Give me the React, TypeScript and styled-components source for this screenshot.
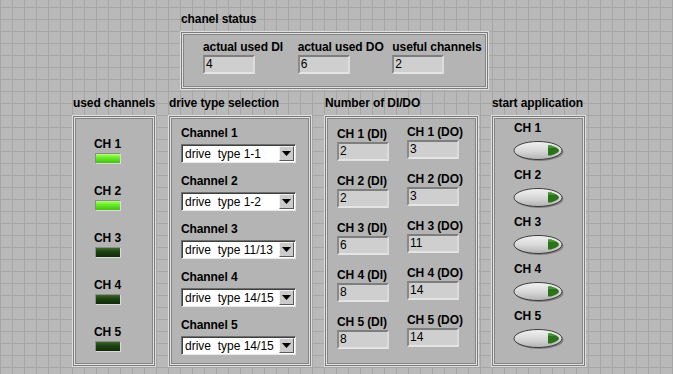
import styled, { createGlobalStyle } from "styled-components";

const GlobalStyle = createGlobalStyle`
  html, body {
    margin: 0;
    padding: 0;
    background: #b8b8b8;
  }
  * { box-sizing: border-box; }
`;

const Panel = styled.div`
  width: 673px;
  height: 374px;
  overflow: hidden;
  padding-top: 12px;
  font-family: "Liberation Sans", Arial, sans-serif;
  color: #000;
  background-color: #b9b9b9;
  background-image:
    linear-gradient(to right, #a6a6a6 1px, transparent 1px),
    linear-gradient(to bottom, #a6a6a6 1px, transparent 1px);
  background-size: 12px 12px;
  background-position: 0 7px;
`;

const TopGroup = styled.div`
  margin-left: 181px;
  width: 307px;
`;

const BottomRow = styled.div`
  display: flex;
  gap: 14px;
  margin: 7px 0 0 73px;
`;

const Group = styled.div<{ $w: number }>`
  width: ${(p) => p.$w}px;
`;

const Caption = styled.div`
  font-size: 12px;
  font-weight: bold;
  line-height: 14px;
  height: 14px;
  white-space: nowrap;
  letter-spacing: -0.1px;
`;

const GroupCaption = styled(Caption)`
  margin-bottom: 6px;
`;

const Frame = styled.div<{ $h: number }>`
  height: ${(p) => p.$h}px;
  background: #b4b4b4;
  border: 1px solid #7c7c7c;
  box-shadow:
    0 0 0 1px #dedede,
    inset 0 0 0 1px #e2e2e2,
    inset 0 0 0 2px #858585;
`;

const StatusFrame = styled(Frame)`
  display: flex;
  padding: 7px 0 0 21px;
`;

const StatusCol = styled.div`
  width: 96px;
  display: flex;
  flex-direction: column;
  gap: 1px;
`;

const Field = styled.div<{ $w?: number }>`
  width: ${(p) => p.$w ?? 52}px;
  height: 19px;
  background: #cfcfcf;
  border-top: 2px solid #7e7e7e;
  border-left: 2px solid #8a8a8a;
  border-bottom: 2px solid #e4e4e4;
  border-right: 2px solid #dcdcdc;
  font-size: 12px;
  line-height: 15px;
  padding-left: 1px;
`;

const LedFrame = styled(Frame)`
  display: flex;
  flex-direction: column;
  gap: 20px;
  padding: 20px 0 0 20px;
`;

const LedItem = styled.div`
  display: flex;
  flex-direction: column;
  gap: 2px;
`;

const Led = styled.div<{ $on: boolean }>`
  width: 26px;
  height: 11px;
  margin-left: 1px;
  border: 1px solid #8c8c8c;
  border-right-color: #dadada;
  border-bottom-color: #dadada;
  background: ${(p) =>
    p.$on
      ? "linear-gradient(to bottom, #b4ff78 0%, #6ff02c 35%, #42c010 100%)"
      : "linear-gradient(to bottom, #3d6a2c 0%, #1f4414 35%, #0f2a08 100%)"};
`;

const DriveFrame = styled(Frame)`
  display: flex;
  flex-direction: column;
  gap: 11px;
  padding: 9px 0 0 11px;
`;

const DriveItem = styled.div`
  display: flex;
  flex-direction: column;
  gap: 4px;
`;

const Select = styled.div`
  width: 115px;
  height: 19px;
  display: flex;
  align-items: center;
  background: #fff;
  border-top: 1px solid #6e6e6e;
  border-left: 1px solid #6e6e6e;
  border-right: 1px solid #e8e8e8;
  border-bottom: 1px solid #e8e8e8;
  box-shadow: inset 1px 1px 0 #404040;
`;

const SelectText = styled.span`
  flex: 1;
  font-size: 12px;
  padding-left: 3px;
  white-space: pre;
`;

const ArrowBtn = styled.div`
  width: 15px;
  height: 15px;
  margin-right: 1px;
  display: flex;
  align-items: center;
  justify-content: center;
  background: #cbcbcb;
  border-top: 1px solid #f2f2f2;
  border-left: 1px solid #f2f2f2;
  border-right: 1px solid #5a5a5a;
  border-bottom: 1px solid #5a5a5a;
`;

const NumFrame = styled(Frame)`
  display: flex;
  padding: 10px 0 0 11px;
`;

const NumCol = styled.div<{ $lift?: boolean }>`
  width: 71px;
  display: flex;
  flex-direction: column;
  gap: 13px;
  margin-top: ${(p) => (p.$lift ? -2 : 0)}px;
`;

const NumItem = styled.div`
  display: flex;
  flex-direction: column;
  gap: 1px;
`;

const StartFrame = styled(Frame)`
  display: flex;
  flex-direction: column;
  gap: 6px;
  padding: 4px 0 0 21px;
`;

const StartItem = styled.div`
  display: flex;
  flex-direction: column;
  gap: 5px;

  svg {
    display: block;
    margin-left: -1px;
  }
`;

const leds = [true, true, false, false, false];
const drives = [
  "drive  type 1-1",
  "drive  type 1-2",
  "drive  type 11/13",
  "drive  type 14/15",
  "drive  type 14/15",
];
const di = ["2", "2", "6", "8", "8"];
const dout = ["3", "3", "11", "14", "14"];

function StartButton() {
  return (
    <svg width="52" height="22" viewBox="0 0 52 22">
      <defs>
        <linearGradient id="btnFill" x1="0" y1="0" x2="0" y2="1">
          <stop offset="0" stopColor="#f2f2f2" />
          <stop offset="0.55" stopColor="#d6d6d6" />
          <stop offset="1" stopColor="#b2b2b2" />
        </linearGradient>
      </defs>
      <ellipse cx="26.5" cy="12" rx="24" ry="9" fill="#808080" />
      <ellipse cx="25" cy="10.5" rx="24" ry="9" fill="url(#btnFill)" stroke="#3c3c3c" strokeWidth="1" />
      <path d="M35 5.5 L38 5.5 Q46 8 46 10.5 Q46 13 38 15.5 L35 15.5 Z" fill="#2b731a" />
      <path d="M35 5.5 L38 5.5 Q42 6.6 44 8 L35 8 Z" fill="#459530" />
    </svg>
  );
}

export default function App() {
  return (
    <Panel>
      <GlobalStyle />
      <TopGroup>
        <GroupCaption>chanel status</GroupCaption>
        <StatusFrame $h={57}>
          <StatusCol>
            <Caption>actual used DI</Caption>
            <Field>4</Field>
          </StatusCol>
          <StatusCol>
            <Caption>actual used DO</Caption>
            <Field>6</Field>
          </StatusCol>
          <StatusCol>
            <Caption>useful channels</Caption>
            <Field>2</Field>
          </StatusCol>
        </StatusFrame>
      </TopGroup>

      <BottomRow>
        <Group $w={82}>
          <GroupCaption>used channels</GroupCaption>
          <LedFrame $h={250}>
            {leds.map((on, i) => (
              <LedItem key={i}>
                <Caption>CH {i + 1}</Caption>
                <Led $on={on} />
              </LedItem>
            ))}
          </LedFrame>
        </Group>

        <Group $w={142}>
          <GroupCaption>drive type selection</GroupCaption>
          <DriveFrame $h={250}>
            {drives.map((d, i) => (
              <DriveItem key={i}>
                <Caption>Channel {i + 1}</Caption>
                <Select>
                  <SelectText>{d}</SelectText>
                  <ArrowBtn>
                    <svg width="9" height="5" viewBox="0 0 9 5">
                      <path d="M0 0 H9 L4.5 5 Z" fill="#000" />
                    </svg>
                  </ArrowBtn>
                </Select>
              </DriveItem>
            ))}
          </DriveFrame>
        </Group>

        <Group $w={153}>
          <GroupCaption>Number of DI/DO</GroupCaption>
          <NumFrame $h={250}>
            <NumCol>
              {di.map((v, i) => (
                <NumItem key={i}>
                  <Caption>CH {i + 1} (DI)</Caption>
                  <Field>{v}</Field>
                </NumItem>
              ))}
            </NumCol>
            <NumCol $lift>
              {dout.map((v, i) => (
                <NumItem key={i}>
                  <Caption>CH {i + 1} (DO)</Caption>
                  <Field>{v}</Field>
                </NumItem>
              ))}
            </NumCol>
          </NumFrame>
        </Group>

        <Group $w={93}>
          <GroupCaption>start application</GroupCaption>
          <StartFrame $h={250}>
            {leds.map((_, i) => (
              <StartItem key={i}>
                <Caption>CH {i + 1}</Caption>
                <StartButton />
              </StartItem>
            ))}
          </StartFrame>
        </Group>
      </BottomRow>
    </Panel>
  );
}
